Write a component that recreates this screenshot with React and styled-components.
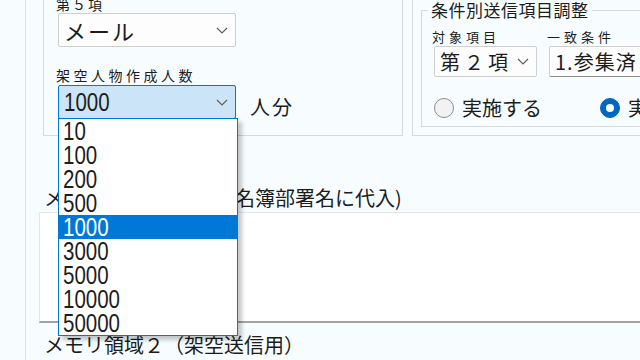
import styled, { createGlobalStyle } from "styled-components";

const GlobalStyle = createGlobalStyle`
  html, body {
    margin: 0;
    padding: 0;
    background: #f7fdff;
    overflow: hidden;
  }
  * {
    box-sizing: border-box;
  }
`;

const jp = `"Noto Sans CJK JP", "Noto Sans", sans-serif`;
const digits = `"Liberation Sans", sans-serif`;

const Page = styled.div`
  width: 640px;
  height: 360px;
  overflow: hidden;
  display: flex;
  background: #f7fdff;
  color: #1c1c1c;
  font-family: ${jp};
`;

const Strip = styled.div`
  flex: none;
  width: 26px;
  border-right: 1px solid #dfe3e5;
`;

const Main = styled.div`
  flex: 1;
  display: flex;
  flex-direction: column;
  padding-left: 13px;
  min-width: 0;
`;

const TopRow = styled.div`
  display: grid;
  grid-template-columns: 360px 260px;
  column-gap: 9px;
  margin: -30px 0 0 4px;
`;

const Panel = styled.div`
  border: 1px solid #d6dadc;
  padding: ${(p) => p.$pad};
  display: flex;
  flex-direction: column;
`;

const FieldLabel = styled.div`
  font-size: ${(p) => p.$size || 14}px;
  line-height: ${(p) => (p.$size || 14) + 4}px;
  letter-spacing: ${(p) => p.$spacing || 3}px;
  margin-top: ${(p) => p.$top || 0}px;
  margin-left: -2px;
  white-space: nowrap;
`;

const Combo = styled.div`
  position: relative;
  width: ${(p) => p.$w}px;
  height: ${(p) => p.$h}px;
  margin-top: ${(p) => p.$top || 0}px;
  display: flex;
  align-items: center;
  justify-content: space-between;
  padding: 0 7px 0 5px;
  border: 1px solid ${(p) => (p.$active ? "#0078d7" : "#cfcfcf")};
  border-bottom-color: ${(p) =>
    p.$active ? "#0078d7" : p.$deep ? "#8c8c8c" : "#cfcfcf"};
  border-radius: 2px;
  background: ${(p) => (p.$active ? "#cce4f7" : "#fdfdfd")};
  flex: none;
`;

const ComboText = styled.span`
  font-size: ${(p) => p.$size}px;
  letter-spacing: ${(p) => p.$spacing || 0}px;
  line-height: 1;
  white-space: nowrap;
`;

/* narrow, tall digits like the Windows UI font */
const Digits = styled.span`
  display: inline-block;
  font-family: ${digits};
  font-size: 25px;
  line-height: 24px;
  transform: scaleX(0.82);
  transform-origin: left center;
  white-space: nowrap;
`;

const Chevron = () => (
  <svg width="12" height="7" viewBox="0 0 12 7">
    <polyline
      points="1,1 6,6 11,1"
      fill="none"
      stroke="#5f5f5f"
      strokeWidth="1.2"
    />
  </svg>
);

const CountRow = styled.div`
  display: flex;
  align-items: flex-end;
  gap: 14px;
  margin-top: 1px;
`;

const Unit = styled.span`
  font-size: 20px;
  line-height: 24px;
  letter-spacing: 2px;
`;

const DropList = styled.ul`
  position: absolute;
  z-index: 10;
  top: 100%;
  left: -1px;
  width: 180px;
  margin: 0;
  padding: 0;
  list-style: none;
  background: #fff;
  border: 1px solid #0078d7;
  box-shadow: 4px 4px 4px rgba(0, 0, 0, 0.22);
`;

const DropItem = styled.li`
  height: 24px;
  padding-left: 4px;
  color: ${(p) => (p.$sel ? "#fff" : "#1c1c1c")};
  background: ${(p) => (p.$sel ? "#0078d7" : "transparent")};
`;

const Group = styled.fieldset`
  margin: 0 0 8px 8px;
  padding: 0 0 7px 12px;
  border: 1px solid #d6dadc;
  min-width: 0;
`;

const Legend = styled.legend`
  font-size: 17px;
  line-height: 20px;
  padding: 0 3px;
  margin-left: -6px;
  letter-spacing: 0.5px;
`;

const FieldGrid = styled.div`
  display: grid;
  grid-template-columns: 103px 120px;
  column-gap: 12px;
  margin-top: 8px;
`;

const FieldCol = styled.div`
  display: flex;
  flex-direction: column;
`;

const RadioRow = styled.div`
  display: flex;
  align-items: center;
  gap: 58px;
  margin-top: 20px;
  height: 22px;
`;

const RadioItem = styled.label`
  display: flex;
  align-items: center;
  gap: 8px;
  font-size: 20px;
  line-height: 22px;
  white-space: nowrap;
`;

const RadioDot = styled.span`
  flex: none;
  width: 20px;
  height: 20px;
  border-radius: 50%;
  display: flex;
  align-items: center;
  justify-content: center;
  border: 1px solid ${(p) => (p.$on ? "#0067c0" : "#8a8a8a")};
  background: ${(p) => (p.$on ? "#0067c0" : "#f2f2f2")};
  &::after {
    content: "";
    display: ${(p) => (p.$on ? "block" : "none")};
    width: 8px;
    height: 8px;
    border-radius: 50%;
    background: #fff;
  }
`;

const MemoLabel = styled.div`
  font-size: 20px;
  line-height: 24px;
  padding-left: 5px;
  margin-top: ${(p) => p.$top}px;
  white-space: nowrap;
`;

const MemoBox = styled.div`
  margin-top: 2px;
  height: 111px;
  width: 620px;
  background: #fff;
  border: 1px solid #e3e7e9;
  border-bottom: 2px solid #a3a3a3;
`;

const counts = ["10", "100", "200", "500", "1000", "3000", "5000", "10000", "50000"];

export default function App() {
  return (
    <Page>
      <GlobalStyle />
      <Strip />
      <Main>
        <TopRow>
          <Panel $pad="24px 0 15px 14px">
            <FieldLabel $spacing={2}>第５項</FieldLabel>
            <Combo $w={178} $h={34}>
              <ComboText $size={22} $spacing={2}>メール</ComboText>
              <Chevron />
            </Combo>
            <FieldLabel $top={19} $spacing={3.5}>
              架空人物作成人数
            </FieldLabel>
            <CountRow>
              <Combo $w={178} $h={34} $active>
                <Digits>1000</Digits>
                <Chevron />
                <DropList>
                  {counts.map((c) => (
                    <DropItem key={c} $sel={c === "1000"}>
                      <Digits>{c}</Digits>
                    </DropItem>
                  ))}
                </DropList>
              </Combo>
              <Unit>人分</Unit>
            </CountRow>
          </Panel>
          <Panel $pad="29px 0 0 0">
            <Group>
              <Legend>条件別送信項目調整</Legend>
              <FieldGrid>
                <FieldCol>
                  <FieldLabel $size={13} $spacing={4}>対象項目</FieldLabel>
                  <Combo $w={103} $h={31} $top={1}>
                    <ComboText $size={20} $spacing={4}>第２項</ComboText>
                    <Chevron />
                  </Combo>
                </FieldCol>
                <FieldCol>
                  <FieldLabel $size={13} $spacing={4}>一致条件</FieldLabel>
                  <Combo $w={110} $h={31} $top={1} $deep>
                    <ComboText $size={20} $spacing={1}>1.参集済</ComboText>
                  </Combo>
                </FieldCol>
              </FieldGrid>
              <RadioRow>
                <RadioItem>
                  <RadioDot />
                  実施する
                </RadioItem>
                <RadioItem>
                  <RadioDot $on />
                  実施しない
                </RadioItem>
              </RadioRow>
            </Group>
          </Panel>
        </TopRow>
        <MemoLabel $top={50}>メモリ領域1（架空人名簿部署名に代入)</MemoLabel>
        <MemoBox />
        <MemoLabel $top={10}>メモリ領域２（架空送信用）</MemoLabel>
      </Main>
    </Page>
  );
}
